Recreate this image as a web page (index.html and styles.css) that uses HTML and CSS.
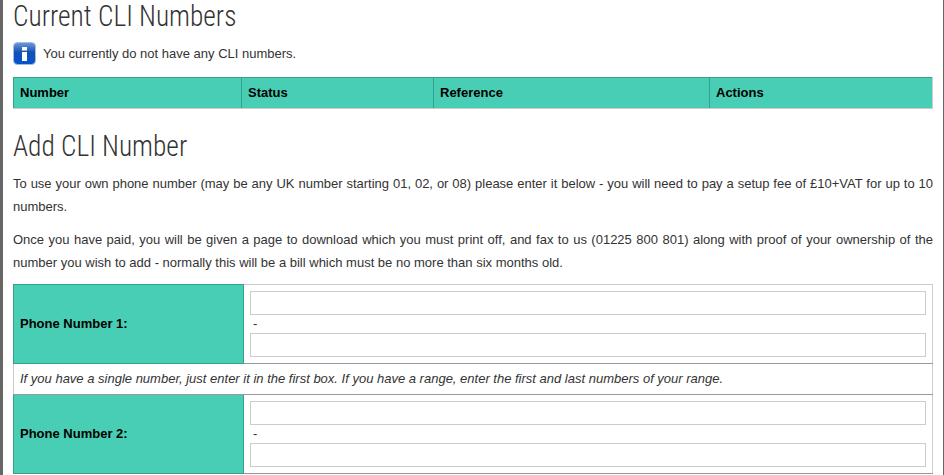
FILE: index.html
```html
<!DOCTYPE html>
<html lang="en">
<head>
<meta charset="utf-8">
<title>CLI Numbers</title>
<link rel="stylesheet" href="styles.css">
</head>
<body>
<main class="page">
  <h2 class="heading heading-first">Current CLI Numbers</h2>
  <div class="notice">
    <svg class="info-icon" width="23" height="23" viewBox="0 0 23 23" aria-hidden="true">
      <defs>
        <linearGradient id="infoGrad" x1="0" y1="0" x2="0" y2="1">
          <stop offset="0" stop-color="#6f9ade"/>
          <stop offset="0.45" stop-color="#1450b4"/>
          <stop offset="1" stop-color="#0552d0"/>
        </linearGradient>
      </defs>
      <rect x="0.5" y="0.5" width="22" height="22" rx="4" fill="url(#infoGrad)" stroke="#a9bcd6"/>
      <rect x="9" y="5" width="5" height="3.5" fill="#fff"/>
      <rect x="9" y="10" width="5" height="9" fill="#fff"/>
    </svg>
    <span>You currently do not have any CLI numbers.</span>
  </div>
  <table class="list-table">
    <colgroup><col class="c1"><col class="c2"><col class="c3"><col></colgroup>
    <thead>
      <tr><th>Number</th><th>Status</th><th>Reference</th><th>Actions</th></tr>
    </thead>
  </table>
  <h2 class="heading heading-second">Add CLI Number</h2>
  <p class="copy">To use your own phone number (may be any UK number starting 01, 02, or 08) please enter it below - you will need to pay a setup fee of £10+VAT for up to 10 numbers.</p>
  <p class="copy">Once you have paid, you will be given a page to download which you must print off, and fax to us (01225 800 801) along with proof of your ownership of the number you wish to add - normally this will be a bill which must be no more than six months old.</p>
  <table class="form-table">
    <colgroup><col class="label-col"><col></colgroup>
    <tbody>
      <tr>
        <th>Phone Number 1:</th>
        <td class="fields"><input type="text" aria-label="Phone Number 1 start"><div class="dash">-</div><input type="text" aria-label="Phone Number 1 end"></td>
      </tr>
      <tr><td class="note" colspan="2">If you have a single number, just enter it in the first box. If you have a range, enter the first and last numbers of your range.</td></tr>
      <tr>
        <th>Phone Number 2:</th>
        <td class="fields"><input type="text" aria-label="Phone Number 2 start"><div class="dash">-</div><input type="text" aria-label="Phone Number 2 end"></td>
      </tr>
    </tbody>
  </table>
</main>
</body>
</html>
```
FILE: styles.css
```css
html, body {
  margin: 0;
  height: 475px;
  overflow: hidden;
  background: #fff;
}
.page {
  box-sizing: border-box;
  width: 944px;
  height: 475px;
  overflow: hidden;
  border-left: 3px solid #666;
  border-right: 1px solid #666;
  padding: 0 10px;
  font-family: "Liberation Sans", Arial, sans-serif;
  font-size: 13px;
  color: #333;
}
.heading {
  margin: 0;
  font-family: Roboto, "Liberation Sans", sans-serif;
  font-weight: 300;
  font-size: 29px;
  font-stretch: 75%;
  line-height: 34px;
  color: #333;
  transform: scaleX(0.945);
  transform-origin: left center;
}
.heading-first { line-height: 32px; }
.heading-second { margin-top: 20px; }
.notice {
  display: flex;
  align-items: center;
  gap: 7px;
  margin-top: 10px;
  height: 23px;
}
.info-icon { flex: none; }
.list-table, .form-table {
  width: 920px;
  border-collapse: collapse;
  table-layout: fixed;
}
.list-table { margin-top: 12px; }
.c1 { width: 228px; }
.c2 { width: 192px; }
.c3 { width: 276px; }
.list-table th {
  height: 31px;
  padding: 0 6px 2px;
  box-sizing: border-box;
  background: #48ceb4;
  color: #000;
  text-align: left;
  font-size: 13px;
  border: 1px solid #35a08c;
  border-bottom-color: #ccc;
}
.list-table th:last-child { border-right-color: #ccc; }
.copy {
  margin: 0 0 11px;
  line-height: 22.5px;
  text-align: justify;
}
.copy + .copy { margin-bottom: 10px; }
.heading-second + .copy { margin-top: 10px; }
.label-col { width: 230px; }
.form-table th {
  padding: 0 6px 2px;
  background: #48ceb4;
  color: #000;
  text-align: left;
  font-size: 13px;
  border: 1px solid #35a08c;
}
.fields {
  padding: 6px;
  border: 1px solid #ccc;
  border-bottom-color: #999;
}
.fields input {
  display: block;
  box-sizing: border-box;
  width: 100%;
  height: 24px;
  padding: 0 6px;
  border: 1px solid #ccc;
  background: #fff;
}
.dash {
  height: 18px;
  line-height: 18px;
  padding-left: 3px;
}
.note {
  height: 31px;
  padding: 0 6px 2px;
  box-sizing: border-box;
  font-style: italic;
  border: 1px solid #ccc;
  border-top-color: #999;
  border-bottom-color: #999;
}
```
